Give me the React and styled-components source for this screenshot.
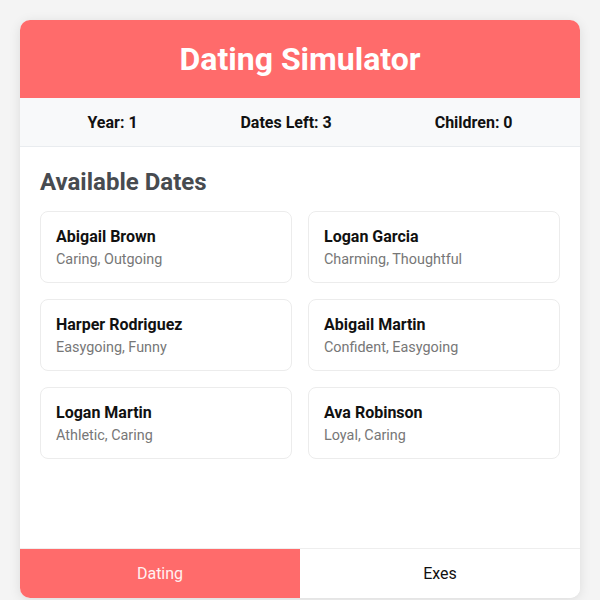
import React from 'react'
import styled, { createGlobalStyle } from 'styled-components'

const GlobalStyle = createGlobalStyle`
  * { box-sizing: border-box; }
  body {
    margin: 0;
    background: #f4f4f4;
    font-family: Roboto, 'Liberation Sans', sans-serif;
  }
`

const Page = styled.div`
  padding: 20px 20px 0;
  height: 600px;
  overflow: hidden;
`

const Card = styled.div`
  height: 578px;
  background: #fff;
  border-radius: 10px;
  box-shadow: 0 2px 12px rgba(0, 0, 0, 0.1);
  overflow: hidden;
  display: flex;
  flex-direction: column;
`

const Header = styled.header`
  background: #ff6b6b;
  color: #fff;
  height: 78px;
  display: flex;
  align-items: center;
  justify-content: center;
  h1 {
    margin: 0;
    font-size: 32px;
    font-weight: 700;
  }
`

const Stats = styled.div`
  height: 49px;
  padding: 0 16px;
  background: #f8f9fa;
  border-bottom: 1px solid #e9ecef;
  display: flex;
  align-items: center;
  justify-content: space-around;
  font-size: 16px;
  font-weight: 700;
  color: #111;
`

const Content = styled.main`
  flex: 1;
  padding: 20px 20px;
  h2 {
    margin: 0 0 14px;
    font-size: 24px;
    font-weight: 700;
    color: #474b50;
    line-height: 30px;
  }
`

const Grid = styled.div`
  display: grid;
  grid-template-columns: 1fr 1fr;
  gap: 16px;
`

const DateCard = styled.div`
  height: 72px;
  border: 1px solid #ececec;
  border-radius: 8px;
  padding: 15px 15px;
  h3 {
    margin: 0 0 3px;
    font-size: 16px;
    font-weight: 700;
    color: #111;
    line-height: 20px;
  }
  p {
    margin: 0;
    font-size: 14.4px;
    color: #777;
    line-height: 20px;
  }
`

const Nav = styled.nav`
  display: flex;
  height: 50px;
  border-top: 1px solid #eee;
`

const Tab = styled.button`
  flex: 1;
  border: none;
  font: inherit;
  font-size: 16px;
  background: ${(p) => (p.$active ? '#ff6b6b' : '#fff')};
  color: ${(p) => (p.$active ? '#fff1f1' : '#111')};
  cursor: pointer;
`

const dates = [
  { name: 'Abigail Brown', traits: 'Caring, Outgoing' },
  { name: 'Logan Garcia', traits: 'Charming, Thoughtful' },
  { name: 'Harper Rodriguez', traits: 'Easygoing, Funny' },
  { name: 'Abigail Martin', traits: 'Confident, Easygoing' },
  { name: 'Logan Martin', traits: 'Athletic, Caring' },
  { name: 'Ava Robinson', traits: 'Loyal, Caring' },
]

const App = () => {
  const [tab, setTab] = React.useState('dating')
  return (
    <>
      <GlobalStyle />
      <Page>
        <Card>
          <Header>
            <h1>Dating Simulator</h1>
          </Header>
          <Stats>
            <span>Year: 1</span>
            <span>Dates Left: 3</span>
            <span>Children: 0</span>
          </Stats>
          <Content>
            <h2>Available Dates</h2>
            <Grid>
              {dates.map((d) => (
                <DateCard key={d.name}>
                  <h3>{d.name}</h3>
                  <p>{d.traits}</p>
                </DateCard>
              ))}
            </Grid>
          </Content>
          <Nav>
            <Tab $active={tab === 'dating'} onClick={() => setTab('dating')}>
              Dating
            </Tab>
            <Tab $active={tab === 'exes'} onClick={() => setTab('exes')}>
              Exes
            </Tab>
          </Nav>
        </Card>
      </Page>
    </>
  )
}

export default App
